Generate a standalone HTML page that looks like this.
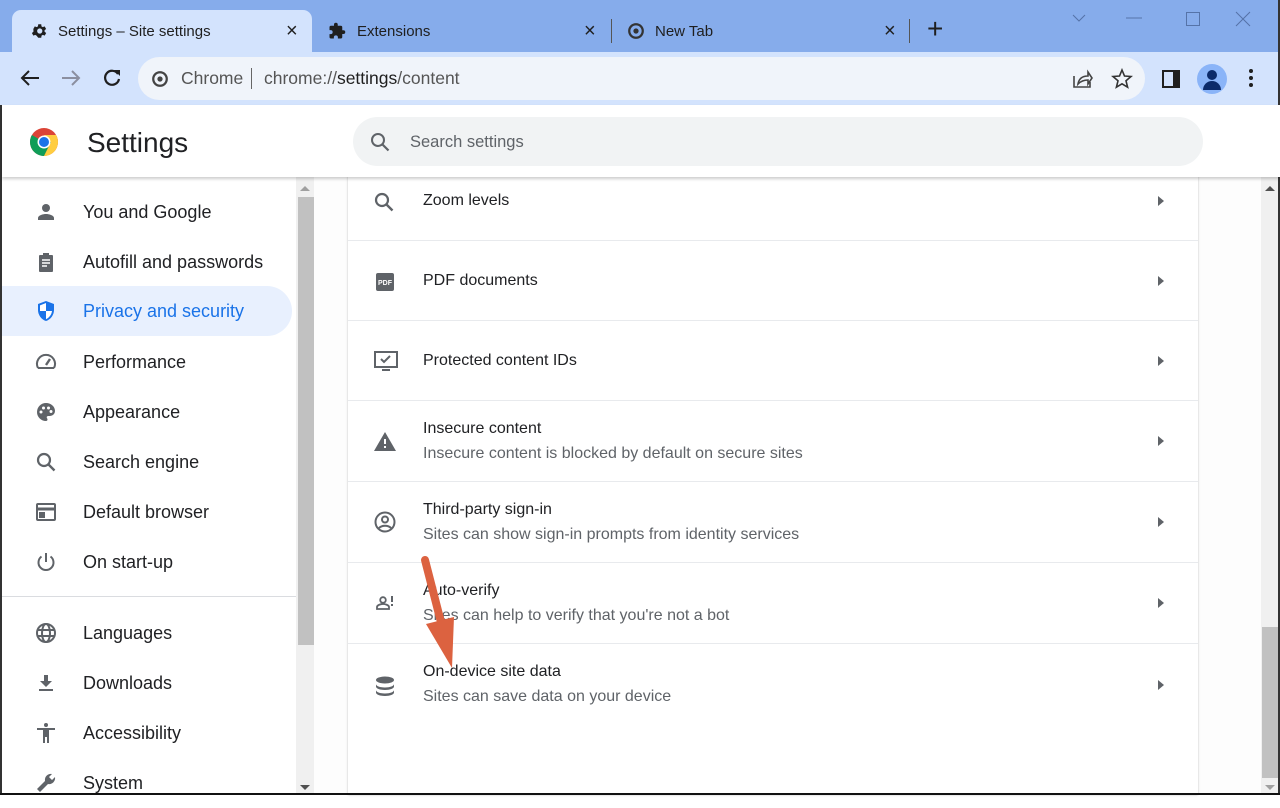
<!DOCTYPE html>
<html><head><style>
*{margin:0;padding:0;box-sizing:border-box}
body{width:1280px;height:795px;overflow:hidden;font-family:"Liberation Sans",sans-serif;background:#fff;position:relative;color:#202124}
.abs{position:absolute}
.tabstrip{left:0;top:0;width:1280px;height:52px;background:#86aceb}
.tab{top:10px;height:42px;font-size:15px;color:#1f1f1f;display:flex;align-items:center}
.toolbar{left:0;top:52px;width:1280px;height:53px;background:#d3e3fd}
.omni{left:138px;top:57px;width:1007px;height:43px;background:#f0f4fa;border-radius:22px}
.side{left:2px;top:177px;width:294px;height:616px;background:#fff}
.item{position:absolute;left:0;width:290px;height:50px;display:flex;align-items:center;font-size:18px;color:#202124}
.item svg{position:absolute;left:32px}
.item span{position:absolute;left:81px}
.card{left:348px;top:176px;width:850px;height:619px;background:#fff;box-shadow:0 0 2px rgba(0,0,0,.25)}
.row{position:absolute;left:0;width:850px;border-top:1px solid #e8eaed}
.row .t{position:absolute;left:75px;font-size:16px;color:#202124}
.row .s{position:absolute;left:75px;font-size:16px;color:#5f6368}
.row .ic{position:absolute;left:25px}
.row .ar{position:absolute;left:810px;width:0;height:0;border-top:5px solid transparent;border-bottom:5px solid transparent;border-left:6px solid #5f6368}
</style></head><body>
<div class="abs" style="left:0;top:0;width:2px;height:795px;background:#333"></div>
<div class="abs tabstrip"></div>
<div class="abs" style="left:12px;top:10px;width:300px;height:43px;background:#d3e3fd;border-radius:9px 9px 0 0"></div>
<div class="abs tab" style="left:30px"><svg width="18" height="18" viewBox="0 0 24 24"><path fill="#1f1f1f" d="M19.4 13a7.5 7.5 0 000-2l2.1-1.6-2-3.5-2.5 1a7 7 0 00-1.7-1L15 3h-4l-.4 2.9a7 7 0 00-1.7 1l-2.5-1-2 3.5L4.6 11a7.5 7.5 0 000 2l-2.1 1.6 2 3.5 2.5-1a7 7 0 001.7 1L11 21h4l.4-2.9a7 7 0 001.7-1l2.5 1 2-3.5zM13 15.5a3.5 3.5 0 110-7 3.5 3.5 0 010 7z"/></svg><span style="margin-left:10px">Settings – Site settings</span></div>
<div class="abs" style="left:286px;top:20px;font-size:20px;color:#1f1f1f">×</div>
<div class="abs tab" style="left:328px;color:#1f1f1f"><svg width="18" height="18" viewBox="0 0 24 24"><path fill="#1f1f1f" d="M20.5 11H19V7a2 2 0 00-2-2h-4V3.5a2.5 2.5 0 00-5 0V5H4a2 2 0 00-2 2v3.8h1.5a2.7 2.7 0 010 5.4H2V20a2 2 0 002 2h3.8v-1.5a2.7 2.7 0 015.4 0V22H17a2 2 0 002-2v-4h1.5a2.5 2.5 0 000-5z"/></svg><span style="margin-left:11px">Extensions</span></div>
<div class="abs" style="left:584px;top:20px;font-size:20px;color:#1f1f1f">×</div>
<div class="abs" style="left:611px;top:19px;width:1px;height:24px;background:#555"></div>
<div class="abs tab" style="left:627px"><svg width="18" height="18" viewBox="0 0 24 24"><circle cx="12" cy="12" r="9" fill="none" stroke="#333" stroke-width="3"/><circle cx="12" cy="12" r="3.5" fill="#333"/></svg><span style="margin-left:10px">New Tab</span></div>
<div class="abs" style="left:884px;top:20px;font-size:20px;color:#1f1f1f">×</div>
<div class="abs" style="left:909px;top:19px;width:1px;height:24px;background:#555"></div>
<div class="abs" style="left:927px;top:13px;font-size:28px;color:#1f1f1f">+</div>
<svg class="abs" style="left:1070px;top:10px" width="200" height="20"><path d="M3 5l6 6 6-6" fill="none" stroke="#5573a8" stroke-width="1"/><path d="M56 8h16" stroke="#5573a8"/><rect x="116.5" y="2.5" width="13" height="13" fill="none" stroke="#5573a8"/><path d="M166 2l14 14M180 2l-14 14" stroke="#5573a8"/></svg>
<div class="abs toolbar"></div>
<svg class="abs" style="left:18px;top:66px" width="110" height="24"><path d="M21 12H5M11 5l-7 7 7 7" fill="none" stroke="#1f1f1f" stroke-width="2"/><path d="M44 12h16M54 5l7 7-7 7" fill="none" stroke="#8b8fa0" stroke-width="2"/><path d="M100 8a7 7 0 10 1 5" fill="none" stroke="#1f1f1f" stroke-width="2.2"/><path d="M96 4h6v6z" fill="#1f1f1f"/></svg>
<div class="abs omni"></div>
<svg class="abs" style="left:151px;top:70px" width="18" height="18" viewBox="0 0 24 24"><circle cx="12" cy="12" r="9" fill="none" stroke="#444" stroke-width="3"/><circle cx="12" cy="12" r="3.5" fill="#444"/></svg>
<div class="abs" style="left:181px;top:68px;font-size:17.5px;color:#555">Chrome</div>
<div class="abs" style="left:251px;top:68px;width:1px;height:21px;background:#666"></div>
<div class="abs" style="left:264px;top:68px;font-size:17.5px;color:#555">chrome://<span style="color:#1f1f1f">settings</span>/content</div>
<svg class="abs" style="left:1071px;top:68px" width="64" height="22"><path d="M3 8v11h16v-5" fill="none" stroke="#444" stroke-width="1.6"/><path d="M7 16c1-6 5-8 10-8V4l4 6-4 6v-4c-4 0-7 1-10 4z" fill="none" stroke="#444" stroke-width="1.6"/><path d="M51 2l2.5 6 6.5.5-5 4.3 1.6 6.4L51 15.8l-5.6 3.4 1.6-6.4-5-4.3 6.5-.5z" fill="none" stroke="#333" stroke-width="1.6"/></svg>
<div class="abs" style="left:1162px;top:70px;width:18px;height:18px;border:2.5px solid #1f1f1f;border-right:7px solid #1f1f1f"></div>
<div class="abs" style="left:1197px;top:64px;width:30px;height:30px;border-radius:50%;background:#8ab4f8;overflow:hidden"><div style="position:absolute;left:10px;top:6px;width:10px;height:10px;border-radius:50%;background:#0b2a6a"></div><div style="position:absolute;left:6px;top:17px;width:18px;height:9px;border-radius:9px 9px 0 0;background:#0b2a6a"></div></div>
<div class="abs" style="left:1249px;top:69px;width:4px;height:4px;border-radius:50%;background:#1f1f1f;box-shadow:0 7px #1f1f1f,0 14px #1f1f1f"></div>
<!-- header -->
<div class="abs" style="left:2px;top:105px;width:1278px;height:72px;background:#fff;box-shadow:0 2px 3px rgba(0,0,0,.2);z-index:2"></div>
<svg class="abs" style="left:29px;top:127px;z-index:3" width="30" height="30" viewBox="0 0 30 30"><circle cx="15" cy="15" r="14" fill="#db4437"/><path d="M15 15L2.9 8A14 14 0 0 0 15 29l7-14z" fill="#0f9d58"/><path d="M15 15l7 0L15 29A14 14 0 0 0 27.1 8z" fill="#ffcd40"/><path d="M15 8h12.1A14 14 0 0 1 22 15z" fill="#ffcd40"/><circle cx="15" cy="15" r="6.5" fill="#fff"/><circle cx="15" cy="15" r="5" fill="#1a73e8"/></svg>
<div class="abs" style="left:87px;top:127px;font-size:28px;color:#202124;z-index:3">Settings</div>
<div class="abs" style="left:353px;top:117px;width:850px;height:49px;background:#f1f3f4;border-radius:25px;z-index:3"></div>
<svg class="abs" style="left:369px;top:131px;z-index:3" width="22" height="22"><circle cx="9" cy="9" r="6" fill="none" stroke="#5f6368" stroke-width="2"/><path d="M13.5 13.5l6 6" stroke="#5f6368" stroke-width="2.2"/></svg>
<div class="abs" style="left:410px;top:133px;font-size:16.5px;color:#5f6368;z-index:3">Search settings</div>
<!-- sidebar -->
<div class="abs side">
<div class="item" style="top:10px"><svg width="24" height="24" viewBox="0 0 24 24"><circle cx="12" cy="8" r="4" fill="#5f6368"/><path d="M4 20v-2c0-2.7 5.3-4 8-4s8 1.3 8 4v2z" fill="#5f6368"/></svg><span>You and Google</span></div>
<div class="item" style="top:60px"><svg width="24" height="24" viewBox="0 0 24 24"><path d="M9 3h6v2h3a1 1 0 011 1v15a1 1 0 01-1 1H6a1 1 0 01-1-1V6a1 1 0 011-1h3z" fill="#5f6368"/><path d="M8 10h8M8 13h8M8 16h5" stroke="#fff" stroke-width="1.4"/></svg><span>Autofill and passwords</span></div>
<div class="item" style="top:109px;background:#e8f0fe;border-radius:0 25px 25px 0;color:#1a73e8"><svg width="24" height="24" viewBox="0 0 24 24"><path d="M12 2l8 3v6c0 5-3.4 9.6-8 11-4.6-1.4-8-6-8-11V5z" fill="#1a73e8"/><path d="M12 4v8H6V6.4zM12 12h6c-.5 3.8-3 7-6 8.1z" fill="#fff"/></svg><span>Privacy and security</span></div>
<div class="item" style="top:160px"><svg width="24" height="24" viewBox="0 0 24 24"><path d="M4 18a9 9 0 1116 0" fill="none" stroke="#5f6368" stroke-width="2"/><path d="M12 15l4-6" stroke="#5f6368" stroke-width="2.4"/><path d="M4 18h16" stroke="#5f6368" stroke-width="2"/></svg><span>Performance</span></div>
<div class="item" style="top:210px"><svg width="24" height="24" viewBox="0 0 24 24"><path d="M12 3a9 9 0 000 18c1 0 1.5-.7 1.5-1.5 0-1-.8-1.3-.8-2.2 0-.8.7-1.3 1.5-1.3H16a5 5 0 005-5c0-4.4-4-8-9-8z" fill="#5f6368"/><circle cx="7" cy="12" r="1.5" fill="#fff"/><circle cx="9.5" cy="8" r="1.5" fill="#fff"/><circle cx="14.5" cy="8" r="1.5" fill="#fff"/><circle cx="17" cy="11.5" r="1.5" fill="#fff"/></svg><span>Appearance</span></div>
<div class="item" style="top:260px"><svg width="24" height="24" viewBox="0 0 24 24"><circle cx="10" cy="10" r="6" fill="none" stroke="#5f6368" stroke-width="2.2"/><path d="M14.5 14.5l6 6" stroke="#5f6368" stroke-width="2.4"/></svg><span>Search engine</span></div>
<div class="item" style="top:310px"><svg width="24" height="24" viewBox="0 0 24 24"><rect x="3" y="4" width="18" height="16" rx="1" fill="none" stroke="#5f6368" stroke-width="2"/><path d="M3 9h18" stroke="#5f6368" stroke-width="3"/><path d="M5 12h6v6H5z" fill="#5f6368"/></svg><span>Default browser</span></div>
<div class="item" style="top:360px"><svg width="24" height="24" viewBox="0 0 24 24"><path d="M12 3v9" stroke="#5f6368" stroke-width="2"/><path d="M7.5 6.5a7.5 7.5 0 109 0" fill="none" stroke="#5f6368" stroke-width="2"/></svg><span>On start-up</span></div>
<div class="abs" style="left:0;top:419px;width:294px;height:1px;background:#dadce0"></div>
<div class="item" style="top:431px"><svg width="24" height="24" viewBox="0 0 24 24"><circle cx="12" cy="12" r="9" fill="none" stroke="#5f6368" stroke-width="2"/><ellipse cx="12" cy="12" rx="4" ry="9" fill="none" stroke="#5f6368" stroke-width="2"/><path d="M3 9h18M3 15h18" stroke="#5f6368" stroke-width="2"/></svg><span>Languages</span></div>
<div class="item" style="top:481px"><svg width="24" height="24" viewBox="0 0 24 24"><path d="M10 4h4v6h4l-6 6-6-6h4z" fill="#5f6368"/><path d="M5 19h14" stroke="#5f6368" stroke-width="2"/></svg><span>Downloads</span></div>
<div class="item" style="top:531px"><svg width="24" height="24" viewBox="0 0 24 24"><circle cx="12" cy="4" r="2" fill="#5f6368"/><path d="M3 7h18v2h-6v13h-2v-6h-2v6H9V9H3z" fill="#5f6368"/></svg><span>Accessibility</span></div>
<div class="item" style="top:581px"><svg width="24" height="24" viewBox="0 0 24 24"><path d="M21 6l-3 3-3-3 3-3a6 6 0 00-7 7L3 18l3 3 8-8a6 6 0 007-7z" fill="#5f6368"/></svg><span>System</span></div>
</div>
<div class="abs" style="left:296px;top:177px;width:18px;height:616px;background:#f0f0f0"></div>
<div class="abs" style="left:300px;top:186px;width:0;height:0;border-left:5px solid transparent;border-right:5px solid transparent;border-bottom:5px solid #a0a0a0"></div>
<div class="abs" style="left:298px;top:197px;width:16px;height:448px;background:#c1c1c1"></div>
<div class="abs" style="left:300px;top:785px;width:0;height:0;border-left:5px solid transparent;border-right:5px solid transparent;border-top:5px solid #505050"></div>
<!-- content -->
<div class="abs" style="left:314px;top:177px;width:947px;height:616px;background:#fdfdfd"></div>
<div class="abs card">
<div class="row" style="top:-20px;height:84px;border-top:none"><svg class="ic" style="top:35px" width="24" height="24"><circle cx="9" cy="9" r="6" fill="none" stroke="#5f6368" stroke-width="2.2"/><path d="M13.5 13.5l6 6" stroke="#5f6368" stroke-width="2.4"/></svg><div class="t" style="top:36px">Zoom levels</div><div class="ar" style="top:40px"></div></div>
<div class="row" style="top:64px;height:80px"><svg class="ic" style="top:29px" width="24" height="24"><rect x="3" y="3" width="18" height="18" rx="2" fill="#5f6368"/><text x="12" y="15" font-size="7" font-weight="bold" fill="#fff" text-anchor="middle" font-family="Liberation Sans">PDF</text></svg><div class="t" style="top:31px">PDF documents</div><div class="ar" style="top:35px"></div></div>
<div class="row" style="top:144px;height:80px"><svg class="ic" style="top:28px" width="26" height="24"><rect x="2" y="3" width="22" height="15" fill="none" stroke="#5f6368" stroke-width="2"/><path d="M8 10l3 3 6-6" fill="none" stroke="#5f6368" stroke-width="2"/><path d="M9 21h8" stroke="#5f6368" stroke-width="2"/></svg><div class="t" style="top:31px">Protected content IDs</div><div class="ar" style="top:35px"></div></div>
<div class="row" style="top:224px;height:81px"><svg class="ic" style="top:28px" width="24" height="24"><path d="M12 3l11 19H1z" fill="#5f6368"/><path d="M12 10v5M12 17v2" stroke="#fff" stroke-width="2"/></svg><div class="t" style="top:19px">Insecure content</div><div class="s" style="top:44px">Insecure content is blocked by default on secure sites</div><div class="ar" style="top:35px"></div></div>
<div class="row" style="top:305px;height:81px"><svg class="ic" style="top:28px" width="24" height="24"><circle cx="12" cy="12" r="9.5" fill="none" stroke="#5f6368" stroke-width="2"/><circle cx="12" cy="9.5" r="3" fill="none" stroke="#5f6368" stroke-width="2"/><path d="M6 18c3-3 9-3 12 0" fill="none" stroke="#5f6368" stroke-width="2"/></svg><div class="t" style="top:19px">Third-party sign-in</div><div class="s" style="top:44px">Sites can show sign-in prompts from identity services</div><div class="ar" style="top:35px"></div></div>
<div class="row" style="top:386px;height:81px"><svg class="ic" style="top:28px" width="24" height="24"><circle cx="10" cy="9" r="2.8" fill="none" stroke="#5f6368" stroke-width="1.8"/><path d="M4 18v-2c0-2 4-3 6-3s6 1 6 3v2z" fill="none" stroke="#5f6368" stroke-width="1.8"/><path d="M19 5v6M19 13v2" stroke="#5f6368" stroke-width="2"/></svg><div class="t" style="top:19px">Auto-verify</div><div class="s" style="top:44px">Sites can help to verify that you're not a bot</div><div class="ar" style="top:35px"></div></div>
<div class="row" style="top:467px;height:152px"><svg class="ic" style="top:30px" width="24" height="24"><ellipse cx="12" cy="6" rx="9" ry="3.5" fill="#5f6368"/><path d="M3 10c0 2 4 3.5 9 3.5s9-1.5 9-3.5v2.5c0 2-4 3.5-9 3.5s-9-1.5-9-3.5zM3 16c0 2 4 3.5 9 3.5s9-1.5 9-3.5v2.5c0 2-4 3.5-9 3.5s-9-1.5-9-3.5z" fill="#5f6368"/></svg><div class="t" style="top:19px">On-device site data</div><div class="s" style="top:44px">Sites can save data on your device</div><div class="ar" style="top:36px"></div></div>
</div>
<!-- arrow -->
<svg class="abs" style="left:410px;top:550px" width="70" height="120"><path d="M15 10L33 80" stroke="#dc6240" stroke-width="8" stroke-linecap="round"/><path d="M16 74L44 67 42 118z" fill="#dc6240"/></svg>
<!-- main scrollbar -->
<div class="abs" style="left:1261px;top:177px;width:18px;height:616px;background:#f0f0f0"></div>
<div class="abs" style="left:1265px;top:186px;width:0;height:0;border-left:5px solid transparent;border-right:5px solid transparent;border-bottom:5px solid #505050"></div>
<div class="abs" style="left:1262px;top:627px;width:16px;height:151px;background:#c1c1c1"></div>
<div class="abs" style="left:1265px;top:785px;width:0;height:0;border-left:5px solid transparent;border-right:5px solid transparent;border-top:5px solid #a0a0a0"></div>
<div class="abs" style="left:1278px;top:0;width:2px;height:795px;background:#333"></div>
<div class="abs" style="left:0;top:793px;width:1280px;height:2px;background:#111"></div>
</body></html>
